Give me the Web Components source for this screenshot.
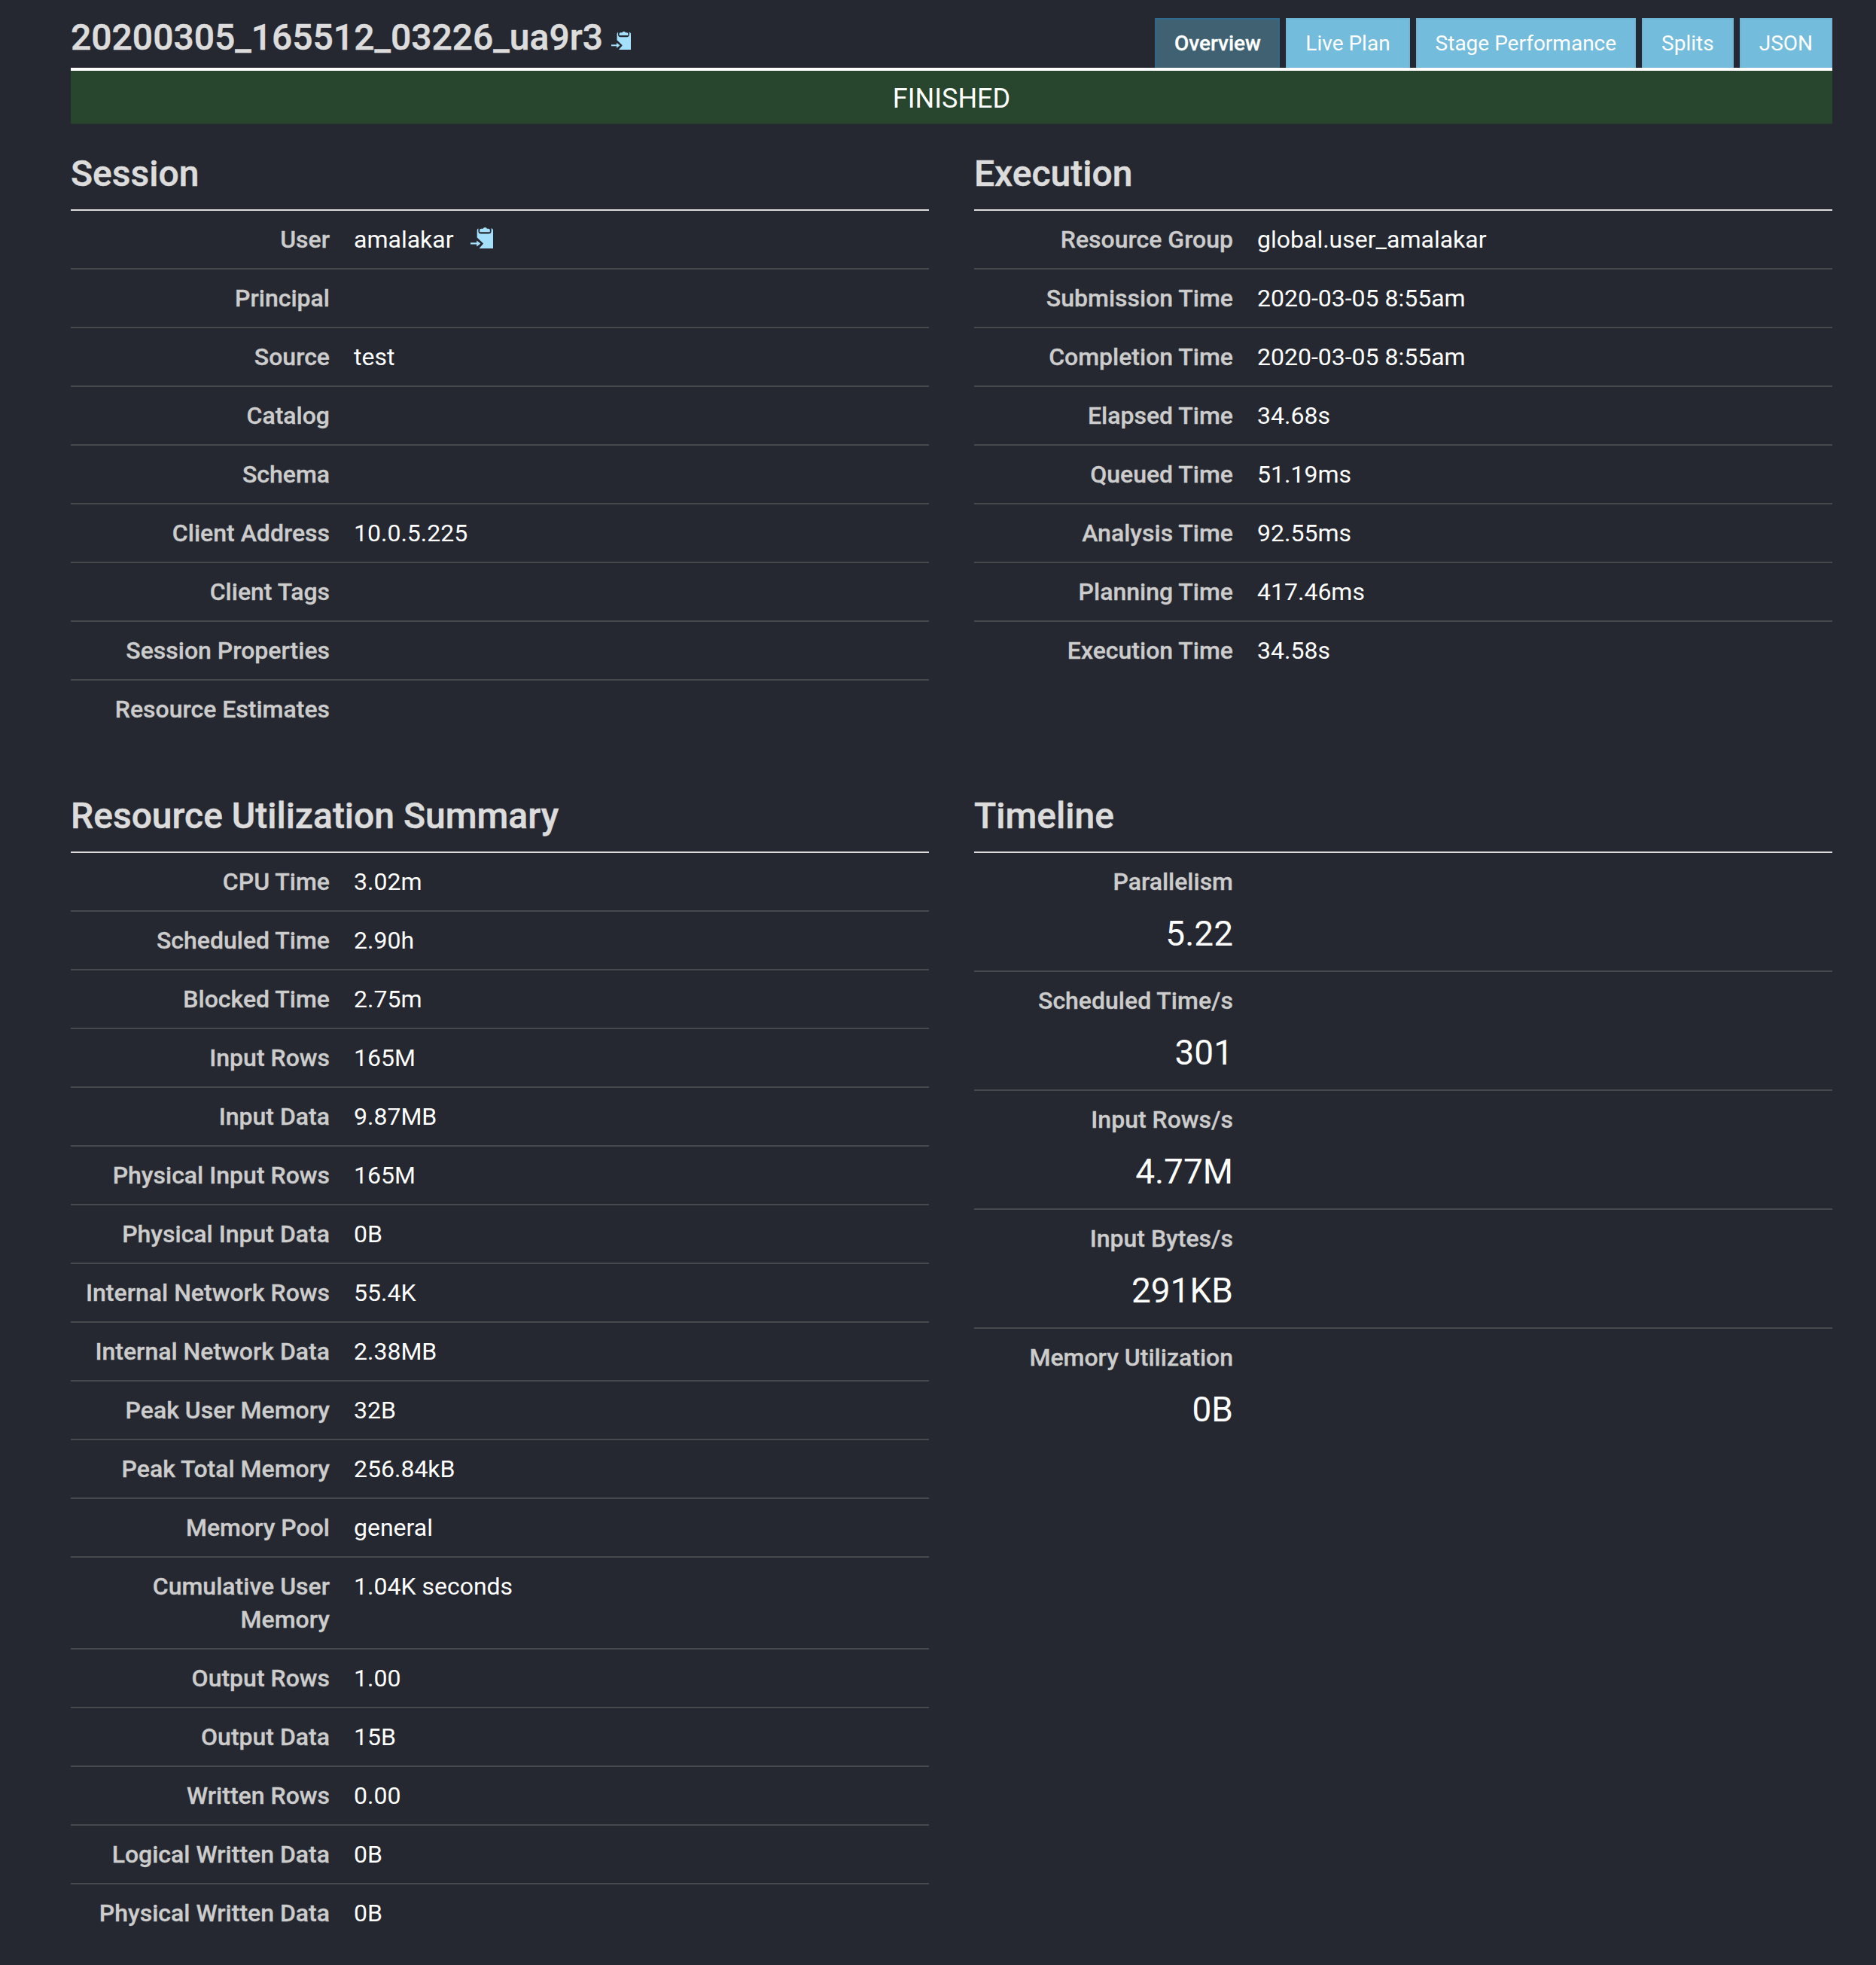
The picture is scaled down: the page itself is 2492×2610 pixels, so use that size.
<!DOCTYPE html>
<html>
<head>
<meta charset="utf-8">
<title>Query overview</title>
<style>
html,body{ margin:0; padding:0; background:#252830; }
body{ font-family:Roboto,"Liberation Sans",sans-serif; color:#fff; }
.grid{
  display:grid;
  grid-template-columns:1140px 1140px;
  column-gap:60px;
}
query-page{ display:block; }
</style>
</head>
<body>
<query-page>
  <query-header slot="header" name="20200305_165512_03226_ua9r3">
    <nav-tab active>Overview</nav-tab>
    <nav-tab>Live Plan</nav-tab>
    <nav-tab>Stage Performance</nav-tab>
    <nav-tab>Splits</nav-tab>
    <nav-tab>JSON</nav-tab>
  </query-header>
  <status-bar>FINISHED</status-bar>
  <div class="grid">
    <info-section heading="Session">
      <info-row label="User">amalakar <copy-icon class="user"></copy-icon></info-row>
      <info-row label="Principal"></info-row>
      <info-row label="Source">test</info-row>
      <info-row label="Catalog"></info-row>
      <info-row label="Schema"></info-row>
      <info-row label="Client Address">10.0.5.225</info-row>
      <info-row label="Client Tags"></info-row>
      <info-row label="Session Properties"></info-row>
      <info-row label="Resource Estimates"></info-row>
    </info-section>
    <info-section heading="Execution">
      <info-row label="Resource Group">global.user_amalakar</info-row>
      <info-row label="Submission Time">2020-03-05 8:55am</info-row>
      <info-row label="Completion Time">2020-03-05 8:55am</info-row>
      <info-row label="Elapsed Time">34.68s</info-row>
      <info-row label="Queued Time">51.19ms</info-row>
      <info-row label="Analysis Time">92.55ms</info-row>
      <info-row label="Planning Time">417.46ms</info-row>
      <info-row label="Execution Time">34.58s</info-row>
    </info-section>
    <info-section heading="Resource Utilization Summary">
      <info-row label="CPU Time">3.02m</info-row>
      <info-row label="Scheduled Time">2.90h</info-row>
      <info-row label="Blocked Time">2.75m</info-row>
      <info-row label="Input Rows">165M</info-row>
      <info-row label="Input Data">9.87MB</info-row>
      <info-row label="Physical Input Rows">165M</info-row>
      <info-row label="Physical Input Data">0B</info-row>
      <info-row label="Internal Network Rows">55.4K</info-row>
      <info-row label="Internal Network Data">2.38MB</info-row>
      <info-row label="Peak User Memory">32B</info-row>
      <info-row label="Peak Total Memory">256.84kB</info-row>
      <info-row label="Memory Pool">general</info-row>
      <info-row label="Cumulative User Memory">1.04K seconds</info-row>
      <info-row label="Output Rows">1.00</info-row>
      <info-row label="Output Data">15B</info-row>
      <info-row label="Written Rows">0.00</info-row>
      <info-row label="Logical Written Data">0B</info-row>
      <info-row label="Physical Written Data">0B</info-row>
    </info-section>
    <info-section heading="Timeline">
      <timeline-row label="Parallelism">5.22</timeline-row>
      <timeline-row label="Scheduled Time/s">301</timeline-row>
      <timeline-row label="Input Rows/s">4.77M</timeline-row>
      <timeline-row label="Input Bytes/s">291KB</timeline-row>
      <timeline-row label="Memory Utilization">0B</timeline-row>
    </info-section>
  </div>
</query-page>

<script>
window.customElements.define('query-page', class extends HTMLElement {
  constructor(){ super(); this.attachShadow({mode:'open'});
    this.shadowRoot.innerHTML = `
    <style>
    :host{ display:block; box-sizing:border-box; width:2492px; padding:24px 58px 29px 94px; }
    </style>
    <slot name="header"></slot>
    <slot></slot>`;
  }
});

window.customElements.define('copy-icon', class extends HTMLElement {
  constructor(){ super(); this.attachShadow({mode:'open'});
    this.shadowRoot.innerHTML = `
    <style>
    :host{ display:inline-block; width:var(--icon-size,30px); height:var(--icon-size,30px); vertical-align:var(--icon-align,-1px); margin-left:var(--icon-gap,15px); }
    svg{ display:block; width:100%; height:100%; }
    </style>
    <svg viewBox="0 0 30 30">
      <path fill="#a4dffb" d="M8.7 6.3a3 3 0 0 1 3-3H27a3 3 0 0 1 3 3V30H11.5l5.6-6.6-8.4-8z"/>
      <rect x="10.4" y="1" width="17.2" height="9.6" rx="3.6" fill="#252830"/>
      <path fill="#a4dffb" d="M12.2 8.2V5.6a1.8 1.8 0 0 1 1.8-1.8h2.6a2.9 2.9 0 0 1 5.4 0h2a1.8 1.8 0 0 1 1.8 1.8v2.6z"/>
      <path fill="#a4dffb" d="M0 22.2h8.2v-2.8l5.2 4-5.2 4v-2.9H0z"/>
    </svg>`;
  }
});

window.customElements.define('nav-tab', class extends HTMLElement {
  constructor(){ super(); this.attachShadow({mode:'open'});
    this.shadowRoot.innerHTML = `
    <style>
    :host{
      display:flex; align-items:center; box-sizing:border-box;
      height:66px; padding:0 24px;
      background:#74bcdb; border:2px solid #6fb6d6; border-bottom:0;
      font-size:28px; color:#fff; line-height:1;
    }
    :host([active]){ padding:0 23.5px; background:#3f6172; border-color:#2f6a8c; font-weight:500; -webkit-text-stroke:.3px #fff; }
    </style>
    <slot></slot>`;
  }
});

window.customElements.define('query-header', class extends HTMLElement {
  static get observedAttributes(){ return ['name']; }
  get name(){ return this.getAttribute("name"); }
  constructor(){ super(); this.attachShadow({mode:'open'});
    this.shadowRoot.innerHTML = `
    <style>
    :host{ display:flex; justify-content:space-between; align-items:flex-start; height:66px; border-bottom:4px solid #fff; }
    h1{ margin:0; padding-top:1px; font-size:48px; line-height:50px; font-weight:500; color:#dcdcdc; -webkit-text-stroke:.5px #dcdcdc; white-space:nowrap; --icon-size:26px; --icon-gap:11px; --icon-align:0; }
    .tabs{ display:flex; gap:8px; }
    </style>
    <h1><span id="name"></span><copy-icon></copy-icon></h1>
    <div class="tabs"><slot></slot></div>`;
  }
  connectedCallback(){ this.shadowRoot.getElementById("name").textContent = this.name; }
});

window.customElements.define('status-bar', class extends HTMLElement {
  constructor(){ super(); this.attachShadow({mode:'open'});
    this.shadowRoot.innerHTML = `
    <style>
    :host{
      display:flex; align-items:center; justify-content:center; box-sizing:border-box;
      height:71px; padding-top:5px; background:#28452d; border-bottom:2px solid #263f2c;
      font-size:36px; color:#fff;
    }
    </style>
    <slot></slot>`;
  }
});

window.customElements.define('info-section', class extends HTMLElement {
  static get observedAttributes(){ return ['heading']; }
  get heading(){ return this.getAttribute("heading"); }
  constructor(){ super(); this.attachShadow({mode:'open'});
    this.shadowRoot.innerHTML = `
    <style>
    :host{ display:block; margin-bottom:38px; }
    h3{
      margin:0; box-sizing:border-box; height:115px;
      display:flex; align-items:flex-end;
      padding-bottom:19px; border-bottom:2px solid #dcdcdc;
      font-size:48px; line-height:56px; font-weight:500; color:#dcdcdc; -webkit-text-stroke:.5px #dcdcdc;
    }
    ::slotted(:last-child){ border-bottom:0; }
    </style>
    <h3 id="heading"></h3>
    <slot></slot>`;
  }
  connectedCallback(){ this.shadowRoot.getElementById("heading").textContent = this.heading; }
});

window.customElements.define('info-row', class extends HTMLElement {
  static get observedAttributes(){ return ['label']; }
  get label(){ return this.getAttribute("label"); }
  constructor(){ super(); this.attachShadow({mode:'open'});
    this.shadowRoot.innerHTML = `
    <style>
    :host{
      display:grid; grid-template-columns:360px 1fr; box-sizing:border-box;
      border-bottom:2px solid #48494d;
      font-size:32px; line-height:44px;
    }
    .label{ padding:16px 16px 16px 0; text-align:right; font-weight:500; color:#cccccc; -webkit-text-stroke:.3px #cccccc; }
    .value{ padding:16px; color:#fff; }
    </style>
    <div class="label" id="label"></div>
    <div class="value"><slot></slot></div>`;
  }
  connectedCallback(){ this.shadowRoot.getElementById("label").textContent = this.label; }
});

window.customElements.define('timeline-row', class extends HTMLElement {
  static get observedAttributes(){ return ['label']; }
  get label(){ return this.getAttribute("label"); }
  constructor(){ super(); this.attachShadow({mode:'open'});
    this.shadowRoot.innerHTML = `
    <style>
    :host{
      display:block; box-sizing:border-box; height:158px;
      border-bottom:2px solid #48494d;
    }
    .cell{ width:344px; padding-top:16px; text-align:right; }
    .label{ font-size:32px; line-height:44px; font-weight:500; color:#cccccc; -webkit-text-stroke:.3px #cccccc; }
    .value{ margin-top:15px; font-size:46px; line-height:64px; color:#fff; }
    </style>
    <div class="cell">
      <div class="label" id="label"></div>
      <div class="value"><slot></slot></div>
    </div>`;
  }
  connectedCallback(){ this.shadowRoot.getElementById("label").textContent = this.label; }
});
</script>
</body>
</html>
